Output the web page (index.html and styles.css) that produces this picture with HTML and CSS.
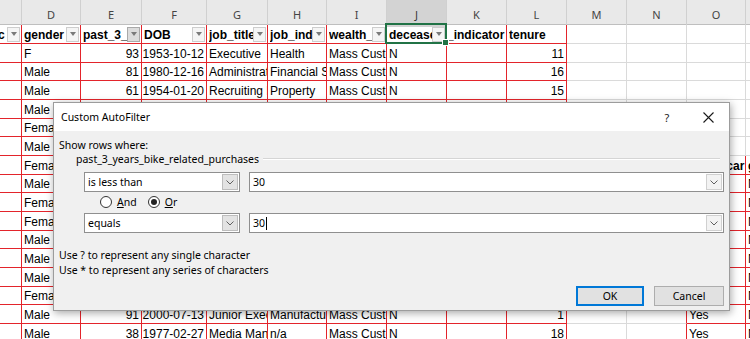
FILE: index.html
```html
<!DOCTYPE html>
<html>
<head>
<meta charset="utf-8">
<link rel="stylesheet" href="styles.css">
</head>
<body>
<div class="sheet">
  <div class="cols">
    <span></span><span>D</span><span>E</span><span>F</span><span>G</span><span>H</span><span>I</span><span class="cur">J</span><span>K</span><span>L</span><span>M</span><span>N</span><span>O</span><span></span>
  </div>
  <div class="r h">
    <span><span class="tx cc">c</span><i class="fb"></i></span>
    <span><span class="tx">gender</span><i class="fb"></i></span>
    <span><span class="tx">past_3_years_bike_related_purchases</span><i class="fb on"></i></span>
    <span><span class="tx">DOB</span><i class="fb"></i></span>
    <span><span class="tx">job_title</span><i class="fb"></i></span>
    <span><span class="tx">job_industry_category</span><i class="fb"></i></span>
    <span><span class="tx">wealth_segment</span><i class="fb"></i></span>
    <span class="selcell"><span class="tx">deceased_indicator</span><i class="fb"></i><i class="sel"></i></span>
    <span class="k"><span class="tx">_indicator</span></span>
    <span><span class="tx">tenure</span></span>
    <span></span><span></span><span></span><span></span>
  </div>
  <div class="r">
    <span></span><span>F</span><span class="n">93</span><span class="n">1953-10-12</span><span>Executive</span><span>Health</span><span>Mass Customer</span><span>N</span><span></span><span class="n">11</span><span></span><span></span><span></span><span></span>
  </div>
  <div class="r">
    <span></span><span>Male</span><span class="n">81</span><span class="n">1980-12-16</span><span>Administrative Officer</span><span>Financial Services</span><span>Mass Customer</span><span>N</span><span></span><span class="n">16</span><span></span><span></span><span></span><span></span>
  </div>
  <div class="r">
    <span></span><span>Male</span><span class="n">61</span><span class="n">1954-01-20</span><span>Recruiting Manager</span><span>Property</span><span>Mass Customer</span><span>N</span><span></span><span class="n">15</span><span></span><span></span><span></span><span></span>
  </div>
  <div class="r">
    <span></span><span>Male</span><span></span><span></span><span></span><span></span><span></span><span></span><span></span><span></span><span></span><span></span><span></span><span></span>
  </div>
  <div class="r">
    <span></span><span>Female</span><span></span><span></span><span></span><span></span><span></span><span></span><span></span><span></span><span></span><span></span><span></span><span></span>
  </div>
  <div class="r">
    <span></span><span>Male</span><span></span><span></span><span></span><span></span><span></span><span></span><span></span><span></span><span></span><span></span><span></span><span></span>
  </div>
  <div class="r t2">
    <span></span><span>Female</span><span></span><span></span><span></span><span></span><span></span><span></span><span></span><span></span><span></span><span></span><span class="b">owns_car</span><span class="b">gender</span>
  </div>
  <div class="r t2">
    <span></span><span>Male</span><span></span><span></span><span></span><span></span><span></span><span></span><span></span><span></span><span></span><span></span><span>No</span><span>NSW</span>
  </div>
  <div class="r t2">
    <span></span><span>Female</span><span></span><span></span><span></span><span></span><span></span><span></span><span></span><span></span><span></span><span></span><span>Yes</span><span>NSW</span>
  </div>
  <div class="r t2">
    <span></span><span>Female</span><span></span><span></span><span></span><span></span><span></span><span></span><span></span><span></span><span></span><span></span><span>No</span><span>NSW</span>
  </div>
  <div class="r t2">
    <span></span><span>Male</span><span></span><span></span><span></span><span></span><span></span><span></span><span></span><span></span><span></span><span></span><span>Yes</span><span>NSW</span>
  </div>
  <div class="r t2">
    <span></span><span>Male</span><span></span><span></span><span></span><span></span><span></span><span></span><span></span><span></span><span></span><span></span><span>No</span><span>NSW</span>
  </div>
  <div class="r t2">
    <span></span><span>Male</span><span></span><span></span><span></span><span></span><span></span><span></span><span></span><span></span><span></span><span></span><span>Yes</span><span>NSW</span>
  </div>
  <div class="r t2">
    <span></span><span>Female</span><span></span><span></span><span></span><span></span><span></span><span></span><span></span><span></span><span></span><span></span><span>No</span><span>NSW</span>
  </div>
  <div class="r t2">
    <span></span><span>Male</span><span class="n">91</span><span class="n">2000-07-13</span><span>Junior Executive</span><span>Manufacturing</span><span>Mass Customer</span><span>N</span><span></span><span class="n">1</span><span></span><span></span><span>Yes</span><span>NSW</span>
  </div>
  <div class="r t2">
    <span></span><span>Male</span><span class="n">38</span><span class="n">1977-02-27</span><span>Media Manager I</span><span>n/a</span><span>Mass Customer</span><span>N</span><span></span><span class="n">18</span><span></span><span></span><span>Yes</span><span>NSW</span>
  </div>
</div>

<div class="dlg">
  <div class="tbar">
    <span class="ttl">Custom AutoFilter</span>
    <span class="help">?</span>
    <span class="close"><svg width="11" height="11" viewBox="0 0 11 11"><path d="M0.5 0.5 L10.5 10.5 M10.5 0.5 L0.5 10.5" stroke="#1a1a1a" stroke-width="1.1" fill="none"/></svg></span>
  </div>
  <div class="body">
    <div class="lbl">Show rows where:</div>
    <div class="field"><span>past_3_years_bike_related_purchases</span><span class="sep"></span></div>
    <div class="crow">
      <div class="combo op"><span class="val">is less than</span><span class="dd"><svg width="8" height="5" viewBox="0 0 8 5"><polyline points="0.5,0.5 4,4 7.5,0.5" stroke="#606060" fill="none"/></svg></span></div>
      <div class="combo ed"><span class="val">30</span><span class="dd"><svg width="8" height="5" viewBox="0 0 8 5"><polyline points="0.5,0.5 4,4 7.5,0.5" stroke="#606060" fill="none"/></svg></span></div>
    </div>
    <div class="radios">
      <span class="rad"><span class="dot"></span><span><u>A</u>nd</span></span>
      <span class="rad on"><span class="dot"></span><span><u>O</u>r</span></span>
    </div>
    <div class="crow">
      <div class="combo op"><span class="val">equals</span><span class="dd"><svg width="8" height="5" viewBox="0 0 8 5"><polyline points="0.5,0.5 4,4 7.5,0.5" stroke="#606060" fill="none"/></svg></span></div>
      <div class="combo ed"><span class="val">30<span class="caret"></span></span><span class="dd"><svg width="8" height="5" viewBox="0 0 8 5"><polyline points="0.5,0.5 4,4 7.5,0.5" stroke="#606060" fill="none"/></svg></span></div>
    </div>
    <div class="hint first">Use ? to represent any single character</div>
    <div class="hint">Use * to represent any series of characters</div>
    <div class="btns"><span class="btn ok">OK</span><span class="btn cancel">Cancel</span></div>
  </div>
</div>
</body>
</html>
```

FILE: styles.css
```css
* { box-sizing: border-box; }
html, body { margin: 0; padding: 0; }
body {
  width: 750px;
  height: 339px;
  overflow: hidden;
  position: relative;
  background: #fff;
  font-family: "Liberation Sans", Arial, sans-serif;
  font-size: 12px;
  color: #000;
}

.sheet { display: flex; flex-direction: column; }

.cols, .r {
  display: grid;
  grid-template-columns: 22px 59px 61px 65px 61px 59px 60px 60px 60px 60px 60px 60px 59px 60px;
}

.cols {
  height: 25px;
  background: #e9e9e9;
  border-bottom: 1px solid #bfbfbf;
}
.cols > span {
  border-right: 1px solid #d0d0d0;
  text-align: center;
  font-family: "Noto Sans", sans-serif;
  font-size: 11px;
  color: #444;
  line-height: 24px;
  padding-top: 3px;
}
.cols > span.cur { background: #d3d3d3; color: #3a3a3a; }

.r { height: 18.67px; }
.r > span {
  border-right: 1px solid #e3242b;
  border-bottom: 1px solid #e3242b;
  overflow: hidden;
  white-space: nowrap;
  padding: 0 2px;
  display: flex;
  align-items: flex-end;
  justify-content: flex-start;
  line-height: 15px;
}
.r > span:nth-child(n+11) { border-color: #dadada; }
.t2 > span:nth-child(12) { border-right-color: #e3242b; }
.t2 > span:nth-child(n+13) { border-color: #e3242b; }
.r > span.n { justify-content: flex-end; }
.r > span.b { font-weight: bold; font-size: 12px; }

.h { height: 19px; font-weight: bold; font-size: 12px; }
.h > span { align-items: center; padding-right: 1px; overflow: visible; }
.h .tx {
  flex: 1 1 auto;
  min-width: 0;
  overflow: hidden;
  white-space: nowrap;
  line-height: 16px;
  align-self: flex-end;
}
.h .tx.cc { margin-left: -4px; }
.h > span.k { padding-left: 0; }
.selcell { position: relative; }

.fb {
  flex: none;
  width: 13px;
  height: 15px;
  border: 1px solid #cdcdcd;
  background: #f5f5f5;
  display: flex;
  align-items: center;
  justify-content: center;
}
.fb::after {
  content: "";
  border-top: 4px solid #7a7a7a;
  border-left: 3px solid transparent;
  border-right: 3px solid transparent;
}
.fb.on { background: #dcdcdc; border-color: #a9a9a9; }

.sel {
  position: absolute;
  left: -2px;
  top: -2px;
  right: -1px;
  bottom: -1px;
  border: 2px solid #217346;
  pointer-events: none;
}
.sel::after {
  content: "";
  position: absolute;
  right: -4px;
  bottom: -4px;
  width: 5px;
  height: 5px;
  background: #217346;
  border: 1px solid #fff;
}

/* dialog */
.dlg {
  position: absolute;
  left: 53px;
  top: 102px;
  width: 677px;
  height: 209px;
  border: 1px solid #9c9c9c;
  background: #f0f0f0;
  box-shadow: 1px 2px 8px rgba(0, 0, 0, 0.35);
  display: flex;
  flex-direction: column;
  font-family: "Noto Sans", sans-serif;
  font-size: 10.5px;
  color: #000;
}
.tbar {
  height: 28px;
  flex: none;
  background: #fff;
  display: flex;
  align-items: center;
  padding: 0 5px 0 7px;
}
.ttl { flex: 1; line-height: 28px; }
.help { width: 20px; margin-right: 15px; text-align: center; color: #222; font-size: 11px; }
.close { width: 32px; display: flex; justify-content: center; align-items: center; }

.body { flex: 1; padding: 0 5px; display: flex; flex-direction: column; }
.lbl { margin-top: 7px; line-height: 14px; height: 14px; }
.field { display: flex; align-items: center; padding-left: 17px; line-height: 14px; height: 14px; }
.sep {
  flex: 1;
  height: 2px;
  margin: 0 4px 0 4px;
  border-top: 1px solid #d5d5d5;
  border-bottom: 1px solid #fff;
}
.crow { display: flex; gap: 9px; padding-left: 25px; height: 20px; margin-top: 6px; }
.radios + .crow { margin-top: 4px; }
.combo { display: flex; height: 20px; border: 1px solid #8f8f8f; background: #fff; }
.combo.op { width: 156px; }
.combo.ed { width: 475px; }
.val { flex: 1; padding-left: 3px; line-height: 18px; display: flex; align-items: center; }
.dd {
  width: 16px;
  margin: 1px;
  display: flex;
  align-items: center;
  justify-content: center;
  border: 1px solid #bdbdbd;
  background: #e3e3e3;
}
.ed .dd { background: #f3f3f3; border-color: #d0d0d0; }
.caret { display: inline-block; width: 1px; height: 13px; background: #000; margin-left: 1px; }

.radios { display: flex; margin-top: 3px; height: 14px; padding-left: 41px; align-items: center; }
.rad { display: flex; align-items: center; gap: 5px; margin-right: 11px; }
.dot {
  width: 12px;
  height: 12px;
  border-radius: 50%;
  border: 1px solid #333;
  background: #fff;
  display: flex;
  align-items: center;
  justify-content: center;
}
.rad.on .dot::after {
  content: "";
  width: 6px;
  height: 6px;
  border-radius: 50%;
  background: #222;
}

.hint { line-height: 15px; height: 15px; }
.hint.first { margin-top: 15px; }

.btns { display: flex; justify-content: flex-end; gap: 10px; margin-top: 8px; }
.btn {
  height: 20px;
  background: #e1e1e1;
  border: 1px solid #adadad;
  display: flex;
  align-items: center;
  justify-content: center;
}
.btn.ok { width: 68px; border-color: #0078d7; box-shadow: inset 0 0 0 1px #0078d7; }
.btn.cancel { width: 70px; }
```
